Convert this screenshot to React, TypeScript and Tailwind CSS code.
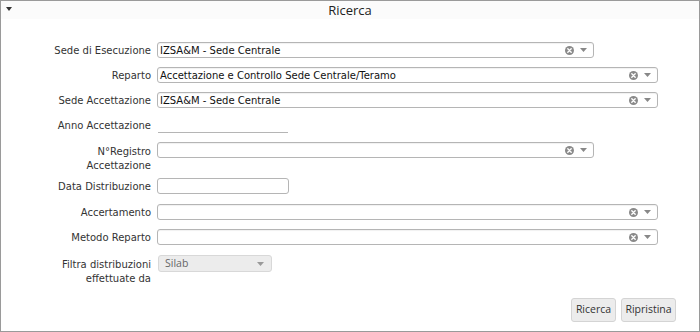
import React from "react";

const labelFont = { fontFamily: '"DejaVu Sans", Verdana, sans-serif' };

function ClearArrow() {
  return (
    <div className="flex items-center gap-[6px] pr-[6px]">
      <svg width="9" height="9" viewBox="0 0 9 9">
        <circle cx="4.5" cy="4.5" r="4.5" fill="#8a8a8a" />
        <path d="M2.8 2.8 L6.2 6.2 M6.2 2.8 L2.8 6.2" stroke="#fff" strokeWidth="1.4" strokeLinecap="round" />
      </svg>
      <svg width="7" height="4" viewBox="0 0 7 4">
        <path d="M0 0 L7 0 L3.5 4 Z" fill="#888" />
      </svg>
    </div>
  );
}

function Combo({ value, wide }: { value?: string; wide?: boolean }) {
  return (
    <div
      className={`h-[16px] ${wide ? "w-[501px]" : "w-[437px]"} border border-[#b5b5b5] rounded-[3px] bg-white flex items-center justify-between shadow-[inset_0_1px_1px_rgba(0,0,0,0.06)]`}
    >
      <span className="pl-[2px] pt-[2px] text-[10px] text-[#111] leading-none" style={labelFont}>
        {value ?? ""}
      </span>
      <ClearArrow />
    </div>
  );
}

function Label({ children }: { children: React.ReactNode }) {
  return (
    <div
      className="w-[156px] pr-[6px] pt-[2px] text-right text-[10px] leading-[14px] text-[#333] shrink-0"
      style={labelFont}
    >
      {children}
    </div>
  );
}

export default function App() {
  return (
    <div className="w-[700px] h-[332px] bg-white">
      <div className="w-full h-full border border-[#9a9a9a] flex flex-col">
        <div className="h-[18px] bg-[#fbfbfb] relative flex items-start justify-center">
          <svg className="absolute left-[5px] top-[6px]" width="6" height="4" viewBox="0 0 6 4">
            <path d="M0 0 L6 0 L3 4 Z" fill="#333" />
          </svg>
          <span className="text-[13px] text-[#222] leading-[16px] mt-[1px]" style={{ fontFamily: '"Open Sans", sans-serif' }}>
            Ricerca
          </span>
        </div>

        <div className="flex flex-col pt-[23px]">
          <div className="flex items-center h-[16px]">
            <Label>Sede di Esecuzione</Label>
            <Combo value="IZSA&M - Sede Centrale" />
          </div>
          <div className="flex items-center h-[16px] mt-[9px]">
            <Label>Reparto</Label>
            <Combo value="Accettazione e Controllo Sede Centrale/Teramo" wide />
          </div>
          <div className="flex items-center h-[16px] mt-[9px]">
            <Label>Sede Accettazione</Label>
            <Combo value="IZSA&M - Sede Centrale" wide />
          </div>
          <div className="flex items-center h-[16px] mt-[9px]">
            <Label>Anno Accettazione</Label>
            <div className="w-[130px] h-[16px] border-b border-[#b5b5b5] ml-[1px]" />
          </div>
          <div className="flex items-start mt-[9px]">
            <Label>
              <div className="pt-[1px]">N°Registro</div>
              <div>Accettazione</div>
            </Label>
            <Combo />
          </div>
          <div className="flex items-center h-[16px] mt-[5px]">
            <Label>Data Distribuzione</Label>
            <div className="w-[132px] h-[16px] border border-[#b5b5b5] rounded-[3px] bg-white" />
          </div>
          <div className="flex items-center h-[16px] mt-[10px]">
            <Label>Accertamento</Label>
            <Combo wide />
          </div>
          <div className="flex items-center h-[16px] mt-[9px]">
            <Label>Metodo Reparto</Label>
            <Combo wide />
          </div>
          <div className="flex items-start mt-[10px]">
            <Label>
              <div className="pt-[1px]">Filtra distribuzioni</div>
              <div>effettuate da</div>
            </Label>
            <div className="ml-[1px] w-[114px] h-[17px] border border-[#d8d8d8] rounded-[3px] bg-[#ececec] flex items-center justify-between pl-[6px] pr-[7px]">
              <span className="text-[10.5px] text-[#666] leading-none" style={{ fontFamily: '"Open Sans", sans-serif' }}>Silab</span>
              <svg width="7" height="4" viewBox="0 0 7 4">
                <path d="M0 0 L7 0 L3.5 4 Z" fill="#999" />
              </svg>
            </div>
          </div>
        </div>

        <div className="flex justify-end gap-[5px] pr-[23px] mt-auto mb-[9px]">
          <button className="h-[24px] w-[45px] border border-[#d4d4d4] rounded-[3px] bg-[#ececec] text-[10.5px] text-[#333]" style={{ fontFamily: '"Open Sans", sans-serif' }}>
            Ricerca
          </button>
          <button className="h-[24px] w-[55px] border border-[#d4d4d4] rounded-[3px] bg-[#ececec] text-[10.5px] text-[#333]" style={{ fontFamily: '"Open Sans", sans-serif' }}>
            Ripristina
          </button>
        </div>
      </div>
    </div>
  );
}
